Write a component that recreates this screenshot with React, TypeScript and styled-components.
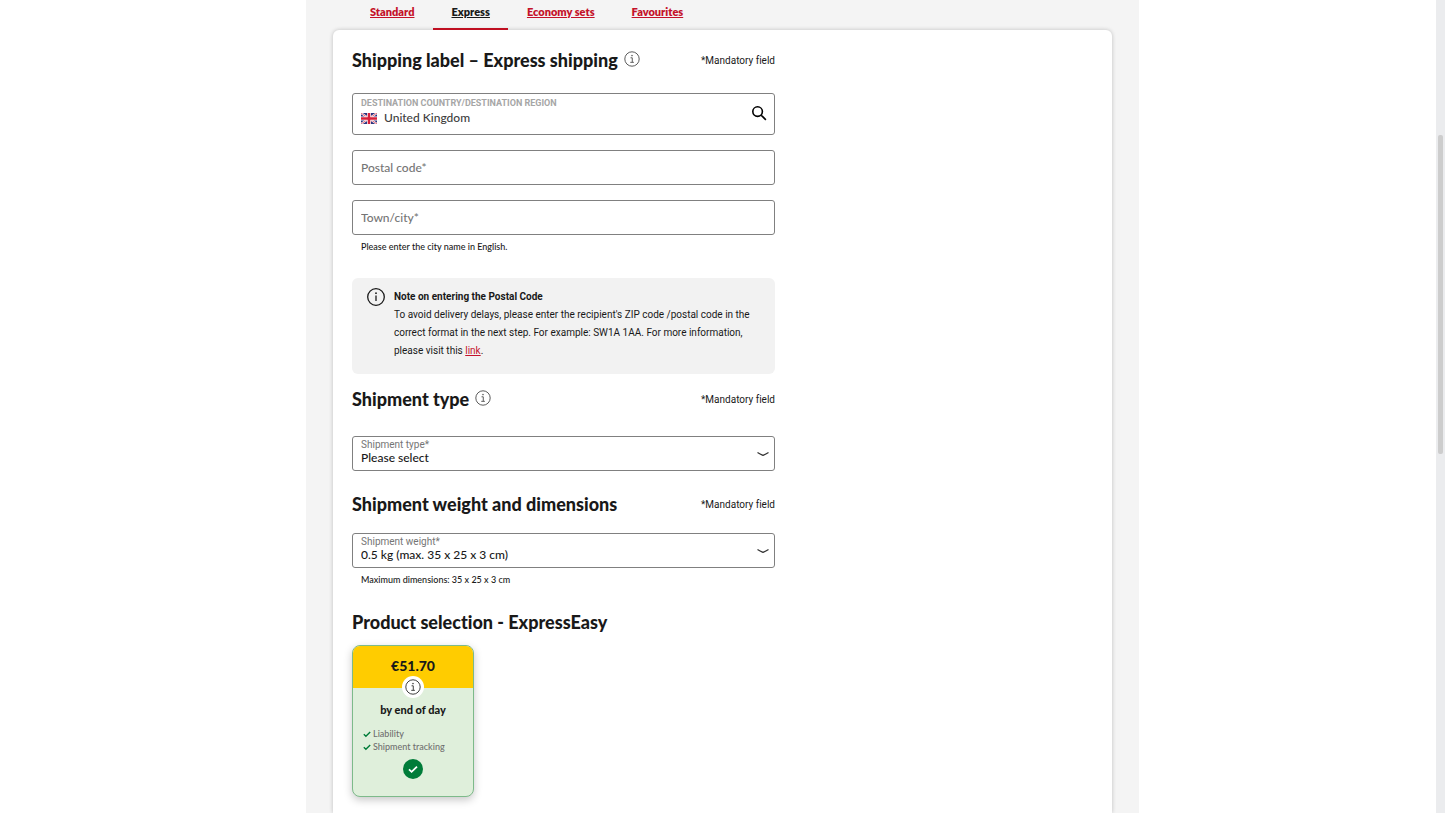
import React from 'react';
import styled, { createGlobalStyle, css } from 'styled-components';

const GlobalStyle = createGlobalStyle`
  *, *::before, *::after { box-sizing: border-box; }
  body {
    margin: 0;
    background: #fff;
    color: #191919;
    font-family: Lato, 'Liberation Sans', sans-serif;
    font-size: 10px;
    font-weight: 500;
    font-variant-ligatures: none;
  }
  button, input, select { font: inherit; color: inherit; }
  h2, h3, p, ul { margin: 0; padding: 0; }
`;

const smallText = css`
  font-family: Roboto, 'Liberation Sans', sans-serif;
  font-weight: 400;
`;

const Page = styled.div`
  min-height: 100vh;
  display: flex;
  flex-direction: column;
  align-items: center;
`;

const Panel = styled.main`
  flex: 1;
  width: 100%;
  max-width: 833px;
  padding: 0 27px;
  background: #f4f4f4;
  display: flex;
  flex-direction: column;
`;

const Tabs = styled.nav`
  display: flex;
  gap: 1px;
  height: 30px;
  padding-left: 19px;
`;

const Tab = styled.a<{ $active?: boolean }>`
  padding: 4px 18px 0;
  border-bottom: 2px solid ${p => (p.$active ? '#bf0f21' : 'transparent')};
  color: ${p => (p.$active ? '#191919' : '#c4122a')};
  font-size: 11px;
  line-height: 16px;
  font-weight: 800;
  text-decoration: underline;
  text-underline-offset: 1px;
  position: relative;
  z-index: 1;
`;

const Sheet = styled.div`
  flex: 1;
  background: #fff;
  border-radius: 6px 6px 0 0;
  box-shadow: 0 0 4px rgba(0, 0, 0, 0.22);
  padding: 18px 19px 16px;
`;

const Form = styled.form`
  max-width: 423px;
  display: flex;
  flex-direction: column;
`;

const Section = styled.section<{ $gap: number }>`
  display: flex;
  flex-direction: column;
  margin-top: ${p => p.$gap}px;
`;

const HeadingRow = styled.div<{ $gap: number }>`
  display: flex;
  align-items: center;
  height: 24px;
  margin-bottom: ${p => p.$gap}px;
`;

const Heading = styled.h2`
  font-size: 18px;
  line-height: 24px;
  font-weight: 900;
`;

const InfoButton = styled.button`
  display: flex;
  margin: 0 0 2px 6px;
  padding: 0;
  border: 0;
  background: none;
  color: #5c5c5c;
`;

const Mandatory = styled.span`
  ${smallText}
  margin-left: auto;
  padding-top: 2px;
  line-height: 16px;
`;

const Fields = styled.div`
  display: flex;
  flex-direction: column;
  gap: 15px;
`;

const frame = css`
  border: 1px solid #808080;
  border-radius: 3px;
  background: #fff;
`;

const CountryField = styled.div`
  ${frame}
  display: flex;
  height: 42px;
  padding: 2px 7px 0 8px;
`;

const CountryMain = styled.div`
  flex: 1;
  min-width: 0;
`;

const CountryLabel = styled.label`
  ${smallText}
  display: block;
  color: #a6a6a6;
  font-size: 9px;
  line-height: 14px;
  font-weight: 700;
`;

const CountryValue = styled.div`
  display: flex;
  align-items: center;
  gap: 7px;
  height: 16px;
`;

const BareInput = styled.input`
  flex: 1;
  min-width: 0;
  padding: 0;
  border: 0;
  outline: 0;
  background: none;
  color: #404040;
  font-size: 12px;
  line-height: 16px;
`;

const SearchButton = styled.button`
  align-self: center;
  display: flex;
  margin-bottom: 4px;
  padding: 0;
  border: 0;
  background: none;
  color: #000;
`;

const TextInput = styled.input`
  ${frame}
  width: 100%;
  height: 35px;
  padding: 0 8px;
  font-size: 12px;
  &::placeholder { color: #757575; opacity: 1; }
`;

const Hint = styled.p`
  margin: 6px 9px 0;
  font-size: 9px;
  line-height: 12px;
`;

const Note = styled.aside`
  ${smallText}
  display: flex;
  gap: 8px;
  margin-top: 25px;
  padding: 10px 14px 14px;
  border-radius: 6px;
  background: #f2f2f2;
  line-height: 18px;
  > svg { flex: none; }
`;

const NoteTitle = styled.h3`
  font-size: 10px;
  line-height: 18px;
  font-weight: 700;
`;

const NoteLink = styled.a`
  color: #c4122a;
`;

const SelectField = styled.div`
  ${frame}
  position: relative;
  height: 35px;
`;

const SelectLabel = styled.label`
  ${smallText}
  position: absolute;
  top: 2px;
  left: 8px;
  color: #757575;
  line-height: 12px;
  pointer-events: none;
`;

const Select = styled.select`
  appearance: none;
  width: 100%;
  height: 100%;
  padding: 7px 30px 0 8px;
  border: 0;
  outline: 0;
  background: none;
  font-size: 12px;
`;

const Chevron = styled.svg`
  position: absolute;
  top: 13px;
  right: 4px;
  pointer-events: none;
`;

const Tile = styled.div`
  width: 122px;
  border: 1px solid #7dba8a;
  border-radius: 8px;
  background: #dfefdb;
  box-shadow: 0 3px 8px rgba(0, 0, 0, 0.22);
  overflow: hidden;
  display: flex;
  flex-direction: column;
  align-items: center;
  height: 152px;
`;

const Price = styled.div`
  align-self: stretch;
  height: 42px;
  background: #fc0;
  font-size: 14px;
  line-height: 40px;
  font-weight: 900;
  text-align: center;
`;

const TileInfo = styled.button`
  display: grid;
  place-items: center;
  width: 22px;
  height: 22px;
  margin-top: -12px;
  padding: 0;
  border: 0;
  border-radius: 50%;
  background: #fff;
  color: #404040;
`;

const TileName = styled.h3`
  margin-top: 4px;
  font-size: 11px;
  line-height: 16px;
  font-weight: 900;
`;

const Features = styled.ul`
  align-self: stretch;
  margin: 9px 0 0 10px;
  list-style: none;
  color: #707070;
  font-size: 9px;
  line-height: 13px;
`;

const Feature = styled.li`
  display: flex;
  align-items: center;
  gap: 2px;
`;

const Choice = styled.label`
  display: grid;
  margin-top: 6px;
  > * { grid-area: 1 / 1; }
`;

const ChoiceRadio = styled.input`
  appearance: none;
  width: 20px;
  height: 20px;
  margin: 0;
  border-radius: 50%;
  background: #007c39;
`;

const ScrollTrack = styled.div`
  position: fixed;
  top: 0;
  right: 0;
  bottom: 0;
  width: 9px;
  padding: 135px 2px 0;
  background: #ebecee;
`;

const ScrollThumb = styled.div`
  width: 5px;
  height: 319px;
  border-radius: 2px;
  background: #cdcdcd;
`;

function InfoIcon() {
  return (
    <svg width="16" height="16" viewBox="0 0 24 24" fill="none" stroke="currentColor" strokeWidth="1.5" aria-hidden="true">
      <circle cx="12" cy="12" r="10.8" />
      <path d="M9.8 10.2h2.6v6.6M9.4 17h5.4" />
      <circle cx="12" cy="6.9" r="0.8" fill="currentColor" strokeWidth="0.8" />
    </svg>
  );
}

function NoteIcon() {
  return (
    <svg width="20" height="18" viewBox="0 0 20 18" fill="none" stroke="#191919" strokeWidth="1.3" aria-hidden="true">
      <circle cx="10" cy="9" r="8.3" />
      <path d="M10 7.400v5.600" />
      <circle cx="10" cy="5.2" r="0.9" fill="#191919" stroke="none" />
    </svg>
  );
}

function SearchIcon() {
  return (
    <svg width="16" height="16" viewBox="0 0 16 16" fill="none" stroke="currentColor" strokeWidth="1.6" aria-hidden="true">
      <circle cx="6.6" cy="6.6" r="4.8" />
      <path d="M10.2 10.2l4.700 4.700" />
    </svg>
  );
}

function Flag() {
  return (
    <svg width="16" height="11" viewBox="0 0 16 11" aria-hidden="true">
      <path fill="#2b3480" d="M0 0h16v11H0z" />
      <path stroke="#fff" strokeWidth="2" d="M0 0l16 11M16 0L0 11" />
      <path stroke="#d8203a" strokeWidth="0.7" d="M0 0l16 11M16 0L0 11" />
      <path stroke="#fff" strokeWidth="4" d="M8 0v11M0 5.5h16" />
      <path stroke="#d8203a" strokeWidth="2.6" d="M8 0v11M0 5.5h16" />
    </svg>
  );
}

function Check() {
  return (
    <svg width="8" height="8" viewBox="0 0 8 8" fill="none" stroke="#007c39" strokeWidth="1.4" aria-hidden="true">
      <path d="M0.8 4.3l2.1 2L7.2 2" />
    </svg>
  );
}

function SelectBox({ id, label, value }: { id: string; label: string; value: string }) {
  return (
    <SelectField>
      <SelectLabel htmlFor={id}>{label}</SelectLabel>
      <Select id={id}>
        <option>{value}</option>
      </Select>
      <Chevron width="14" height="8" viewBox="0 0 14 8" fill="none" stroke="#333" strokeWidth="1.3" aria-hidden="true">
        <path d="M1.5 2.5Q4 4 7 5.4Q10 4 12.5 2.5" />
      </Chevron>
    </SelectField>
  );
}

function SectionTitle({ title, info, mandatory, gap }: { title: string; info?: boolean; mandatory?: boolean; gap: number }) {
  return (
    <HeadingRow $gap={gap}>
      <Heading>{title}</Heading>
      {info && (
        <InfoButton type="button" aria-label={`About ${title}`}>
          <InfoIcon />
        </InfoButton>
      )}
      {mandatory && <Mandatory>*Mandatory field</Mandatory>}
    </HeadingRow>
  );
}

export default function App() {
  return (
    <Page>
      <GlobalStyle />
      <Panel>
        <Tabs>
          <Tab href="#standard">Standard</Tab>
          <Tab href="#express" $active aria-current="page">Express</Tab>
          <Tab href="#economy">Economy sets</Tab>
          <Tab href="#favourites">Favourites</Tab>
        </Tabs>
        <Sheet>
          <Form>
            <Section $gap={0}>
              <SectionTitle title="Shipping label – Express shipping" info mandatory gap={21} />
              <Fields>
                <CountryField>
                  <CountryMain>
                    <CountryLabel htmlFor="country">DESTINATION COUNTRY/DESTINATION REGION</CountryLabel>
                    <CountryValue>
                      <Flag />
                      <BareInput id="country" defaultValue="United Kingdom" />
                    </CountryValue>
                  </CountryMain>
                  <SearchButton type="button" aria-label="Search">
                    <SearchIcon />
                  </SearchButton>
                </CountryField>
                <TextInput placeholder="Postal code*" aria-label="Postal code" />
                <TextInput placeholder="Town/city*" aria-label="Town/city" aria-describedby="city-hint" />
              </Fields>
              <Hint id="city-hint">Please enter the city name in English.</Hint>
              <Note>
                <NoteIcon />
                <div>
                  <NoteTitle>Note on entering the Postal Code</NoteTitle>
                  <p>
                    To avoid delivery delays, please enter the recipient's ZIP code /postal code in the correct
                    format in the next step. For example: SW1A 1AA. For more information, please visit
                    this <NoteLink href="#postal-codes">link</NoteLink>.
                  </p>
                </div>
              </Note>
            </Section>
            <Section $gap={13}>
              <SectionTitle title="Shipment type" info mandatory gap={25} />
              <SelectBox id="shipment-type" label="Shipment type*" value="Please select" />
            </Section>
            <Section $gap={21}>
              <SectionTitle title="Shipment weight and dimensions" mandatory gap={17} />
              <SelectBox id="shipment-weight" label="Shipment weight*" value="0.5 kg (max. 35 x 25 x 3 cm)" />
              <Hint>Maximum dimensions: 35 x 25 x 3 cm</Hint>
            </Section>
            <Section $gap={24}>
              <SectionTitle title="Product selection - ExpressEasy" gap={11} />
              <Tile>
                <Price>€51.70</Price>
                <TileInfo type="button" aria-label="Product details">
                  <InfoIcon />
                </TileInfo>
                <TileName>by end of day</TileName>
                <Features>
                  <Feature><Check />Liability</Feature>
                  <Feature><Check />Shipment tracking</Feature>
                </Features>
                <Choice>
                  <ChoiceRadio type="radio" name="product" defaultChecked aria-label="by end of day" />
                  <svg width="20" height="20" viewBox="0 0 20 20" fill="none" stroke="#fff" strokeWidth="1.8" aria-hidden="true">
                    <path d="M6 10.4l2.6 2.4L14 7.6" />
                  </svg>
                </Choice>
              </Tile>
            </Section>
          </Form>
        </Sheet>
      </Panel>
      <ScrollTrack>
        <ScrollThumb />
      </ScrollTrack>
    </Page>
  );
}
